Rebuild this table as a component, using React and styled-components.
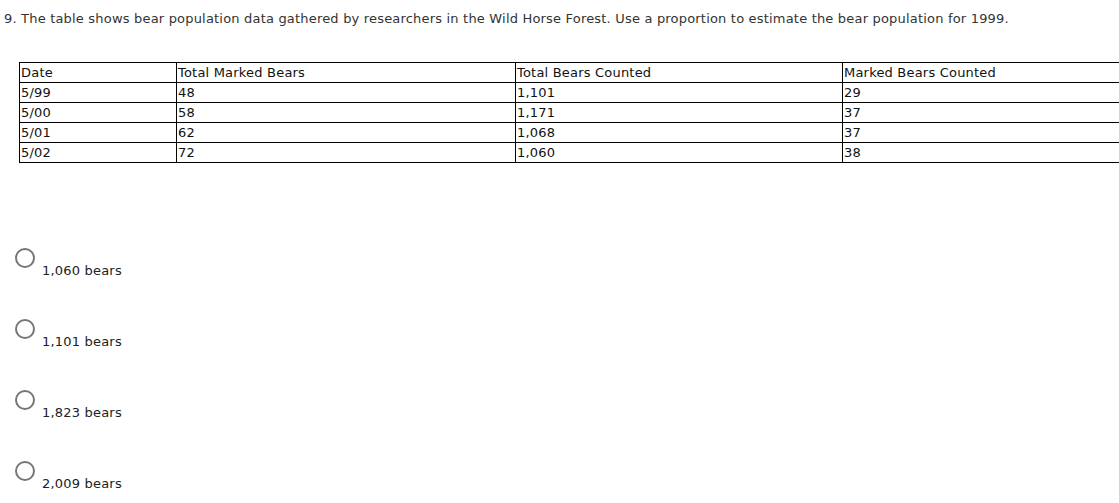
import React from "react";
import styled, { createGlobalStyle } from "styled-components";

const Global = createGlobalStyle`
  html, body { margin: 0; padding: 0; background: #fff; overflow: hidden; }
  body { font-family: Verdana, "DejaVu Sans", sans-serif; }
`;

const Page = styled.div`
  width: 1119px;
  height: 503px;
  overflow: hidden;
  position: relative;
`;

const Question = styled.p`
  margin: 0;
  padding: 11px 0 0 4px;
  font-size: 13px;
  line-height: 16px;
  letter-spacing: 0.19px;
  color: #333;
  white-space: nowrap;
`;

const Table = styled.table`
  margin: 35px 0 0 19px;
  border-collapse: collapse;
  table-layout: fixed;
  width: 1130px;
  font-size: 13px;
  letter-spacing: 0.2px;
  color: #111;
`;

const Cell = styled.td`
  border: 1px solid #000;
  height: 19px;
  padding: 0 0 0 1px;
  line-height: 19px;
  white-space: nowrap;
  vertical-align: middle;
`;

const Options = styled.div`
  display: flex;
  flex-direction: column;
  gap: 31px;
  margin-top: 85px;
  padding-left: 15px;
`;

const Option = styled.label`
  display: flex;
  align-items: flex-start;
  height: 40px;
`;

const Radio = styled.span`
  width: 16px;
  height: 16px;
  border: 2px solid #767676;
  border-radius: 50%;
  box-sizing: content-box;
  flex: none;
`;

const OptionText = styled.span`
  font-size: 13px;
  letter-spacing: 0.2px;
  color: #222;
  margin: 15px 0 0 7px;
  line-height: 16px;
`;

const rows = [
  ["Date", "Total Marked Bears", "Total Bears Counted", "Marked Bears Counted"],
  ["5/99", "48", "1,101", "29"],
  ["5/00", "58", "1,171", "37"],
  ["5/01", "62", "1,068", "37"],
  ["5/02", "72", "1,060", "38"],
];

const options = ["1,060 bears", "1,101 bears", "1,823 bears", "2,009 bears"];

export default function App() {
  return (
    <Page>
      <Global />
      <Question>
        9. The table shows bear population data gathered by researchers in the Wild Horse Forest. Use a proportion to estimate the bear population for 1999.
      </Question>
      <Table>
        <colgroup>
          <col style={{ width: 157 }} />
          <col style={{ width: 339 }} />
          <col style={{ width: 327 }} />
          <col style={{ width: 307 }} />
        </colgroup>
        <tbody>
          {rows.map((r, i) => (
            <tr key={i}>
              {r.map((c, j) => (
                <Cell key={j}>{c}</Cell>
              ))}
            </tr>
          ))}
        </tbody>
      </Table>
      <Options>
        {options.map((o) => (
          <Option key={o}>
            <Radio />
            <OptionText>{o}</OptionText>
          </Option>
        ))}
      </Options>
    </Page>
  );
}
